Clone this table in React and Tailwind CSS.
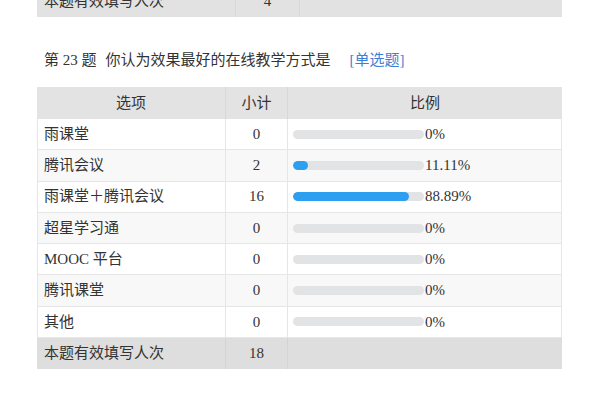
const rows = [
  { name: "雨课堂", count: 0, pct: 0, label: "0%" },
  { name: "腾讯会议", count: 2, pct: 11.11, label: "11.11%" },
  { name: "雨课堂＋腾讯会议", count: 16, pct: 88.89, label: "88.89%" },
  { name: "超星学习通", count: 0, pct: 0, label: "0%" },
  { name: "MOOC 平台", count: 0, pct: 0, label: "0%" },
  { name: "腾讯课堂", count: 0, pct: 0, label: "0%" },
  { name: "其他", count: 0, pct: 0, label: "0%" },
];

function Bar({ pct }) {
  return (
    <div className="w-[131px] h-[9px] rounded-full bg-[#e2e3e5] overflow-hidden">
      <div className="h-full rounded-full bg-[#2d9ff0]" style={{ width: `${pct}%` }} />
    </div>
  );
}

export default function App() {
  return (
    <div
      className="w-[600px] h-[396px] bg-white overflow-hidden text-[15px] text-[#333]"
      style={{ fontFamily: '"Liberation Serif", "Noto Sans CJK SC", serif' }}
    >
      <div className="mt-[-14px] mx-[37px] w-[525px] h-[31px] flex bg-[#e2e2e2]">
        <div className="w-[199px] pl-[7px] flex items-center border-r border-[#d8d8d8]">本题有效填写人次</div>
        <div className="w-[64px] flex items-center justify-center border-r border-[#d8d8d8]">4</div>
        <div className="flex-1" />
      </div>

      <div className="ml-[44px] mt-[31px] h-[24px] flex items-center">
        <span>第 23 题</span>
        <span className="ml-[9px]">你认为效果最好的在线教学方式是</span>
        <span className="ml-[19px] text-[#3d7fd6]">[单选题]</span>
      </div>

      <div className="mx-[37px] mt-[15px] w-[525px]">
        <div className="h-[32px] flex bg-[#e3e3e3]">
          <div className="w-[189px] flex items-center justify-center border-r border-[#d8d8d8]">选项</div>
          <div className="w-[62px] flex items-center justify-center border-r border-[#d8d8d8]">小计</div>
          <div className="flex-1 flex items-center justify-center">比例</div>
        </div>
        {rows.map((r, i) => (
          <div
            key={r.name}
            className={`h-[31.3px] flex border-b border-x border-[#e6e6e6] ${i % 2 === 1 ? "bg-[#f8f8f8]" : "bg-white"}`}
          >
            <div className="w-[188px] pl-[6px] flex items-center border-r border-[#e6e6e6]">{r.name}</div>
            <div className="w-[62px] flex items-center justify-center border-r border-[#e6e6e6]">{r.count}</div>
            <div className="flex-1 pl-[5px] flex items-center">
              <Bar pct={r.pct} />
              <span className="ml-[1px]">{r.label}</span>
            </div>
          </div>
        ))}
        <div className="h-[31px] flex bg-[#dedede]">
          <div className="w-[189px] pl-[7px] flex items-center border-r border-[#d4d4d4]">本题有效填写人次</div>
          <div className="w-[62px] flex items-center justify-center border-r border-[#d4d4d4]">18</div>
          <div className="flex-1" />
        </div>
      </div>
    </div>
  );
}
